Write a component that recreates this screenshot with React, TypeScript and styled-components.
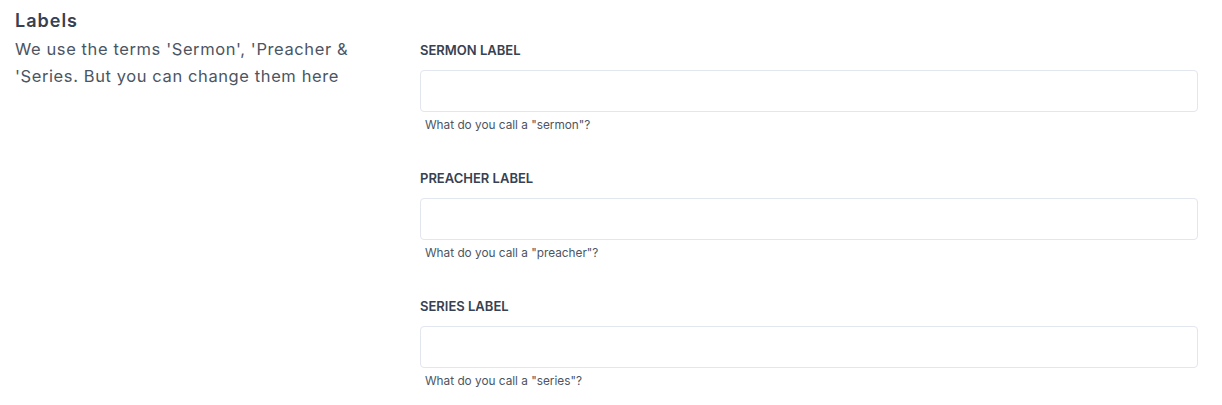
import styled, { createGlobalStyle } from 'styled-components';

const GlobalStyle = createGlobalStyle`
  body {
    margin: 0;
    background: #ffffff;
    font-family: Inter, "Noto Sans", sans-serif;
  }
`;

const Section = styled.div`
  display: grid;
  grid-template-columns: 405px 778px;
  padding: 8px 0 0 15px;
`;

const Intro = styled.div`
  display: flex;
  flex-direction: column;
`;

const Title = styled.h3`
  margin: 0 0 2px;
  font-size: 18px;
  line-height: 26px;
  font-weight: 600;
  letter-spacing: 1px;
  color: #374151;
`;

const Description = styled.p`
  margin: 0;
  width: 350px;
  font-size: 16.5px;
  line-height: 27px;
  letter-spacing: 0.6px;
  color: #4b5563;
`;

const Fields = styled.div`
  display: flex;
  flex-direction: column;
  padding-top: 34px;
  gap: 37px;
`;

const Field = styled.div`
  display: flex;
  flex-direction: column;
`;

const Label = styled.label`
  font-size: 13px;
  line-height: 16px;
  font-weight: 600;
  color: #374151;
  text-transform: uppercase;
  margin-bottom: 12px;
`;

const Input = styled.input`
  box-sizing: border-box;
  width: 100%;
  height: 42px;
  border: 1px solid #e2e6ee;
  border-radius: 4px;
  padding: 0 12px;
  font-family: inherit;
  font-size: 14px;
  outline: none;
`;

const Help = styled.span`
  margin: 5px 0 0 5px;
  font-size: 11.8px;
  line-height: 16px;
  color: #4b5563;
`;

const fields = [
  { name: 'sermon', label: 'Sermon Label', help: 'What do you call a "sermon"?' },
  { name: 'preacher', label: 'Preacher Label', help: 'What do you call a "preacher"?' },
  { name: 'series', label: 'Series Label', help: 'What do you call a "series"?' },
];

const App = () => {
  return (
    <>
      <GlobalStyle />
      <Section>
        <Intro>
          <Title>Labels</Title>
          <Description>
            We use the terms 'Sermon', 'Preacher &amp; 'Series. But you can change them here
          </Description>
        </Intro>
        <Fields>
          {fields.map((f) => (
            <Field key={f.name}>
              <Label htmlFor={f.name}>{f.label}</Label>
              <Input id={f.name} type="text" />
              <Help>{f.help}</Help>
            </Field>
          ))}
        </Fields>
      </Section>
    </>
  );
};

export default App;
